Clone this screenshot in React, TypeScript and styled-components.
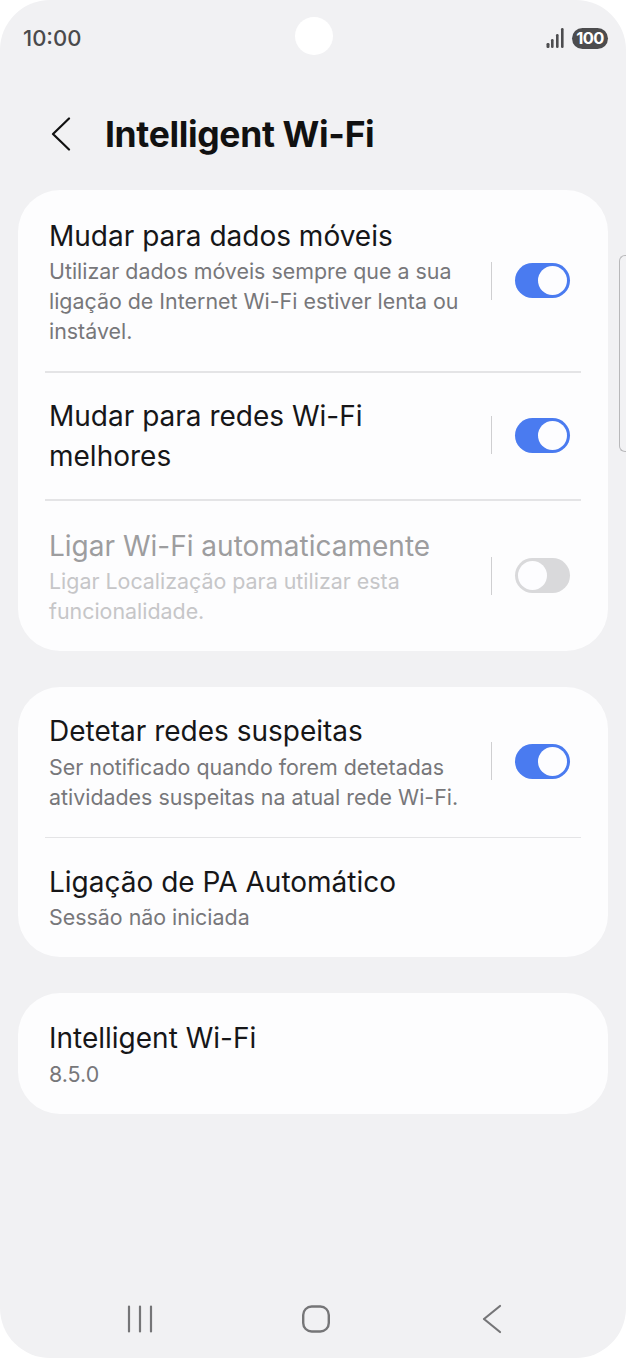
import React from "react";
import styled, { createGlobalStyle } from "styled-components";

const GlobalStyle = createGlobalStyle`
  html, body {
    background: #fff;
    margin: 0;
    padding: 0;
  }
  * {
    box-sizing: border-box;
  }
`;

function App() {
  return (
    <>
      <GlobalStyle />
      <Screen>
        <StatusBar>
          <Clock>10:00</Clock>
          <StatusIcons>
            <svg width="18" height="20" viewBox="0 0 18 20" fill="#4d4d4f">
              <rect x="0.5" y="15" width="3" height="5" rx="1.2" />
              <rect x="5" y="11" width="2.6" height="9" rx="1.2" />
              <rect x="10" y="6" width="2.6" height="14" rx="1.2" />
              <rect x="15" y="0" width="2.6" height="20" rx="1.2" />
            </svg>
            <Battery>100</Battery>
          </StatusIcons>
        </StatusBar>
        <CameraHole />
        <Header>
          <BackButton>
            <svg width="20" height="34" viewBox="0 0 20 34" fill="none" stroke="#111" strokeWidth="2.2" strokeLinecap="round" strokeLinejoin="round">
              <path d="M18 1.5 L2 17 L18 32.5" />
            </svg>
          </BackButton>
          <Title>Intelligent Wi-Fi</Title>
        </Header>
        <Cards>
          <Card>
            <Row $top={25.5}>
              <RowText>
                <RowTitle>Mudar para dados móveis</RowTitle>
                <RowSub>Utilizar dados móveis sempre que a sua ligação de Internet Wi-Fi estiver lenta ou instável.</RowSub>
              </RowText>
              <SwitchArea>
                <Toggle $on />
              </SwitchArea>
            </Row>
            <Divider />
            <Row $top={23.5}>
              <RowText>
                <RowTitle $wrapped>Mudar para redes Wi-Fi<br />melhores</RowTitle>
              </RowText>
              <SwitchArea>
                <Toggle $on />
              </SwitchArea>
            </Row>
            <Divider />
            <Row $top={25}>
              <RowText>
                <RowTitle $disabled>Ligar Wi-Fi automaticamente</RowTitle>
                <RowSub $disabled>Ligar Localização para utilizar esta funcionalidade.</RowSub>
              </RowText>
              <SwitchArea>
                <Toggle />
              </SwitchArea>
            </Row>
          </Card>
          <Card>
            <Row $top={24.5}>
              <RowText>
                <RowTitle>Detetar redes suspeitas</RowTitle>
                <RowSub>Ser notificado quando forem detetadas atividades suspeitas na atual rede Wi-Fi.</RowSub>
              </RowText>
              <SwitchArea>
                <Toggle $on />
              </SwitchArea>
            </Row>
            <Divider />
            <Row $top={23.5}>
              <RowText>
                <RowTitle>Ligação de PA Automático</RowTitle>
                <RowSub>Sessão não iniciada</RowSub>
              </RowText>
            </Row>
          </Card>
          <Card>
            <Row $top={25.5}>
              <RowText>
                <RowTitle>Intelligent Wi-Fi</RowTitle>
                <RowSub>8.5.0</RowSub>
              </RowText>
            </Row>
          </Card>
        </Cards>
        <ScrollHint />
        <NavBar>
          <svg width="26" height="28" viewBox="0 0 26 28" fill="none" stroke="#757577" strokeWidth="2.2" strokeLinecap="round">
            <path d="M2 1.5 V26.5 M13 1.5 V26.5 M24 1.5 V26.5" />
          </svg>
          <svg width="30" height="28" viewBox="0 0 30 28" fill="none" stroke="#757577" strokeWidth="2.4">
            <rect x="2.2" y="1.5" width="25.6" height="25" rx="8.5" />
          </svg>
          <svg width="20" height="30" viewBox="0 0 20 30" fill="none" stroke="#757577" strokeWidth="2.2" strokeLinecap="round" strokeLinejoin="round">
            <path d="M18 2 L2 15 M2 15 L18 28" />
          </svg>
        </NavBar>
      </Screen>
    </>
  );
}

const Screen = styled.div`
  background: #f1f1f3;
  border-radius: 50px;
  color: #111;
  display: flex;
  flex-direction: column;
  font-family: "Inter", "Roboto", sans-serif;
  height: 1358px;
  overflow: hidden;
  position: relative;
  width: 626px;
`;

const StatusBar = styled.div`
  align-items: center;
  display: flex;
  height: 75px;
  justify-content: space-between;
  padding: 1px 18px 0 23px;
`;

const Clock = styled.span`
  color: #4a4a4c;
  font-size: 22px;
  font-weight: 500;
`;

const StatusIcons = styled.div`
  align-items: center;
  display: flex;
  gap: 8px;
`;

const Battery = styled.span`
  background: #4c4c4e;
  border-radius: 11px;
  color: #fff;
  font-size: 16.5px;
  font-weight: 700;
  height: 21px;
  letter-spacing: -0.6px;
  line-height: 21px;
  text-align: center;
  width: 36px;
`;

const CameraHole = styled.div`
  background: #fff;
  border-radius: 50%;
  height: 38px;
  left: 295px;
  position: absolute;
  top: 17px;
  width: 38px;
`;

const Header = styled.div`
  align-items: center;
  display: flex;
  height: 115px;
  padding: 3px 0 0 51px;
`;

const BackButton = styled.div`
  display: flex;
  width: 54px;
`;

const Title = styled.h1`
  font-size: 35.5px;
  font-weight: 700;
  letter-spacing: -0.35px;
  margin: 0;
`;

const Cards = styled.div`
  display: flex;
  flex-direction: column;
  gap: 35.5px;
  padding: 0 18px;
`;

const Card = styled.section`
  background: #fdfdfe;
  border-radius: 42px;
  display: flex;
  flex-direction: column;
`;

const Row = styled.div<{ $top: number }>`
  align-items: center;
  display: flex;
  padding: ${(props) => props.$top}px 38px 25px 31px;
`;

const RowText = styled.div`
  flex: 1;
  min-width: 0;
`;

const RowTitle = styled.div<{ $disabled?: boolean; $wrapped?: boolean }>`
  color: ${(props) => (props.$disabled ? "#9d9d9f" : "#161618")};
  font-size: 28px;
  line-height: 40px;
  margin-bottom: ${(props) => (props.$wrapped ? "-2px" : "0")};
`;

const RowSub = styled.div<{ $disabled?: boolean }>`
  color: ${(props) => (props.$disabled ? "#c6c6c8" : "#77777a")};
  font-size: 21.4px;
  line-height: 30px;
  margin-top: 0.5px;
  max-width: 416px;
`;

const SwitchArea = styled.div`
  align-items: center;
  border-left: 1px solid #cfcfd1;
  display: flex;
  height: 38px;
  margin-left: 15px;
  padding-left: 23px;
`;

const Toggle = styled.span<{ $on?: boolean }>`
  background: ${(props) => (props.$on ? "#4a7bf0" : "#d9d9db")};
  border-radius: 18px;
  display: block;
  height: 35px;
  position: relative;
  width: 55px;

  &::after {
    background: #fdfdff;
    border-radius: 50%;
    content: "";
    height: 29px;
    left: ${(props) => (props.$on ? "23px" : "3px")};
    position: absolute;
    top: 3px;
    width: 29px;
  }
`;

const Divider = styled.hr`
  background: #e4e4e6;
  border: none;
  flex-shrink: 0;
  height: 1.5px;
  margin: 0 27px;
`;

const ScrollHint = styled.div`
  background: #f2f2f4;
  border: 1.5px solid #b8b8ba;
  border-radius: 6px 0 0 6px;
  border-right: none;
  height: 197px;
  position: absolute;
  right: 0;
  top: 255px;
  width: 7px;
`;

const NavBar = styled.nav`
  align-items: center;
  display: grid;
  grid-template-columns: repeat(3, 176px);
  height: 30px;
  justify-items: center;
  margin-bottom: 24px;
  margin-top: auto;
  padding-left: 52px;
`;

export default App;
